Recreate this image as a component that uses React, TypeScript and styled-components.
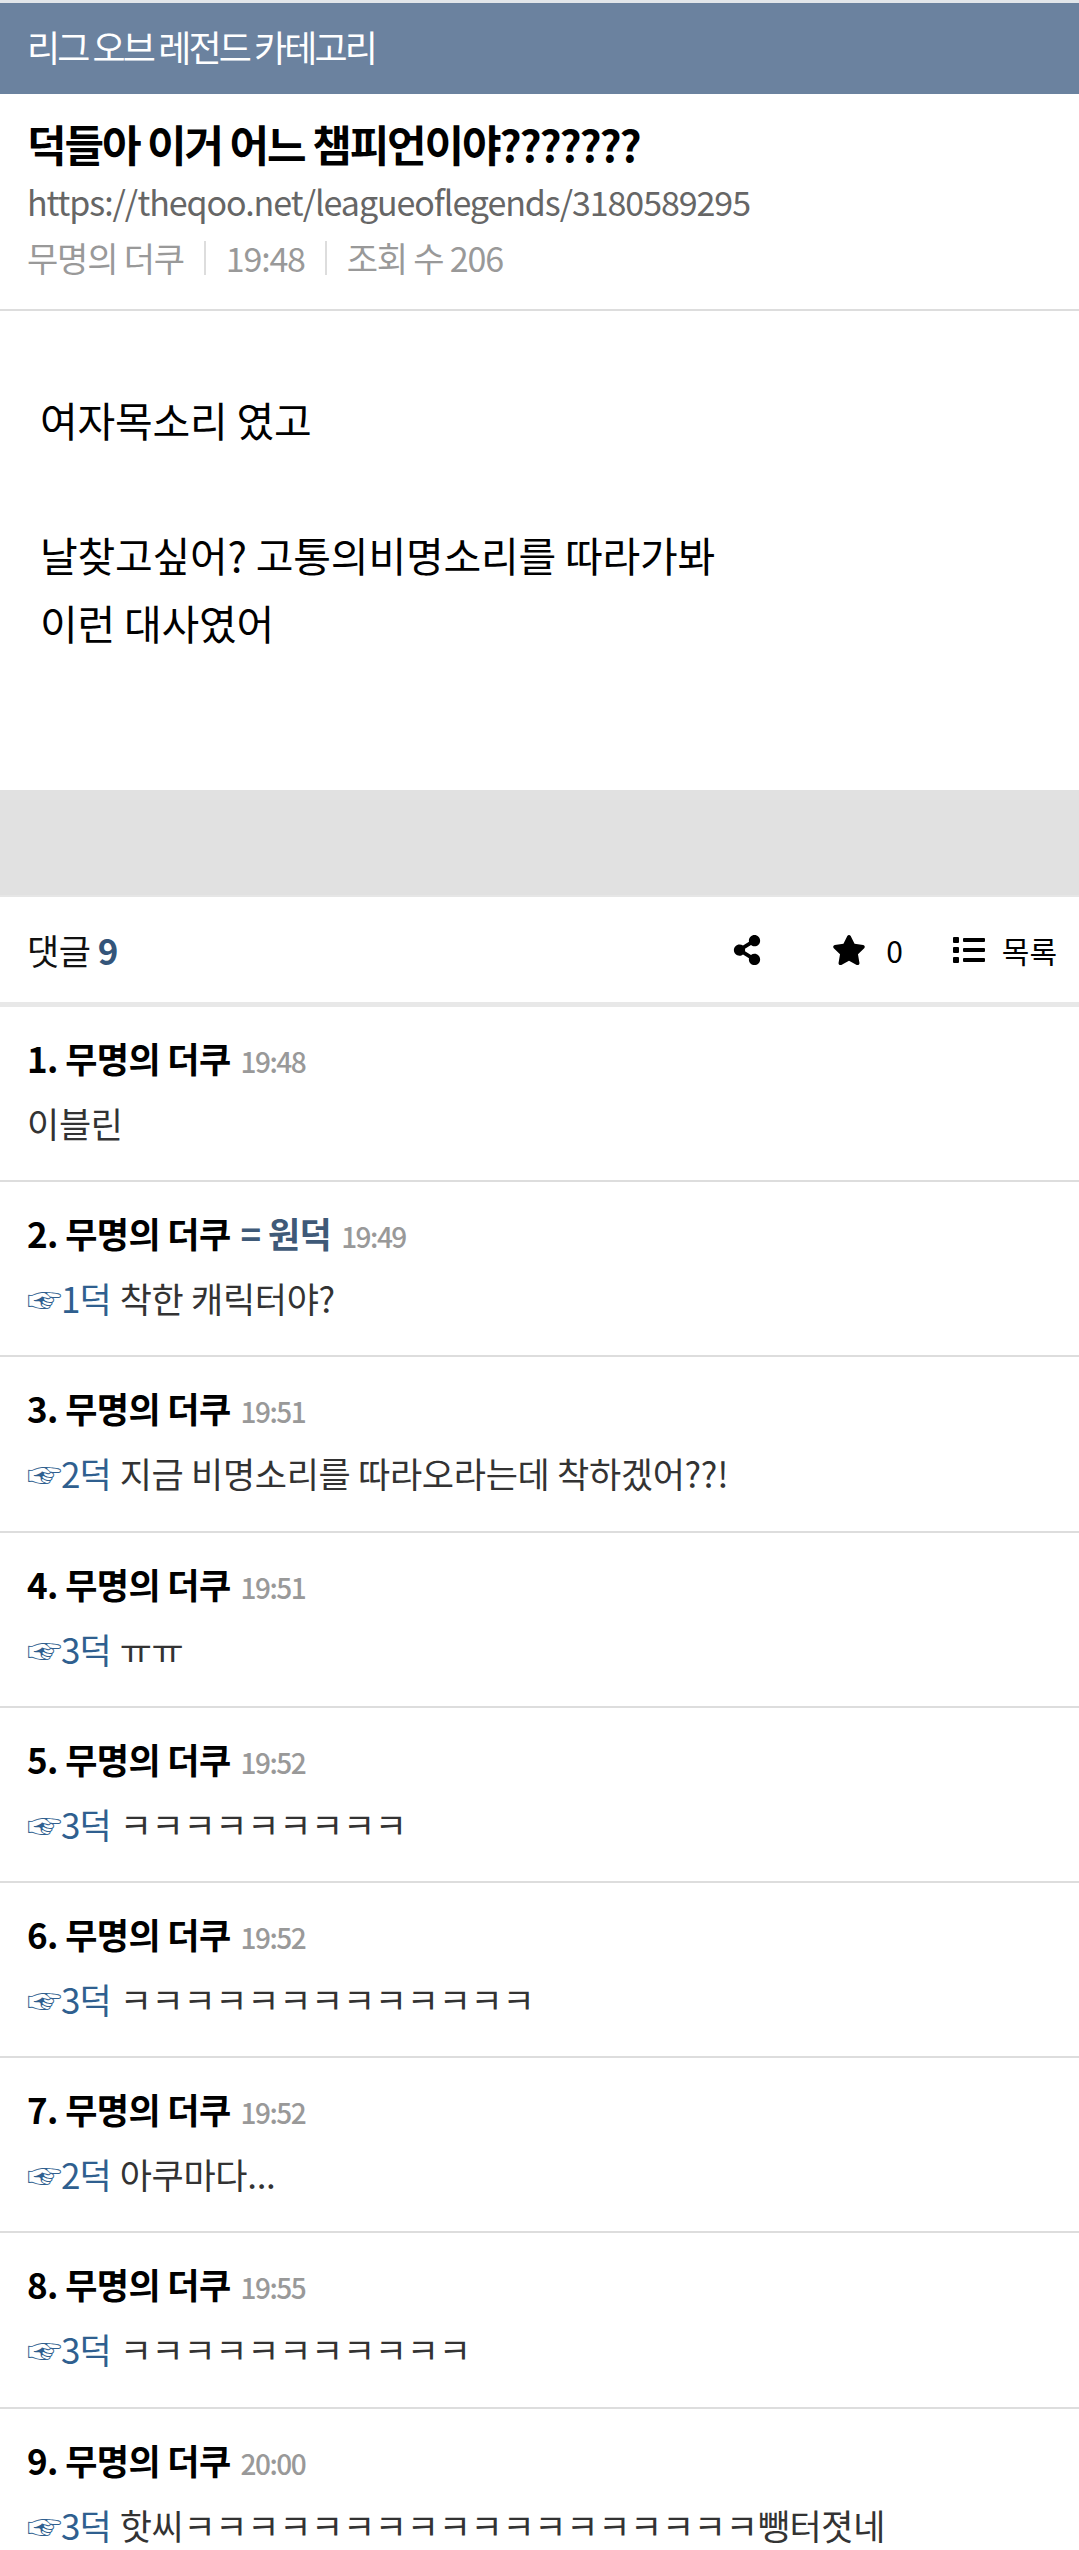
import React from 'react'
import styled, { createGlobalStyle } from 'styled-components'
import { FaList, FaShareAlt, FaStar } from 'react-icons/fa'

const GlobalStyle = createGlobalStyle`
  html, body {
    margin: 0;
    padding: 0;
    background: #ffffff;
    font-family: 'Noto Sans CJK KR', 'Noto Sans', sans-serif;
  }
  * {
    box-sizing: border-box;
  }
`

// Style
const Page = styled.div`
  width: 1079px;
  height: 2550px;
  overflow: hidden;
  background: #ffffff;
`
const CategoryBar = styled.div`
  height: 94px;
  border-top: 3px solid #e2e6ea;
  background: #6b829f;
  color: #ffffff;
  font-size: 36px;
  letter-spacing: -2.9px;
  line-height: 86px;
  padding-left: 27px;
`
const Head = styled.div`
  height: 217px;
  padding: 19px 27px 0;
  border-bottom: 2px solid #dddddd;
`
const Title = styled.h1`
  margin: 0;
  font-size: 43px;
  font-weight: 700;
  line-height: 60px;
  letter-spacing: -2.1px;
  color: #000000;
`
const Url = styled.div`
  margin-top: 4px;
  font-size: 34px;
  line-height: 50px;
  letter-spacing: -1.07px;
  color: #666666;
`
const Meta = styled.div`
  margin-top: 6px;
  display: flex;
  align-items: center;
  font-size: 34px;
  line-height: 50px;
  letter-spacing: -1.2px;
  color: #999999;
`
const MetaItem = styled.span`
  & + & {
    margin-left: 20px;
    padding-left: 20px;
    border-left: 2px solid #dddddd;
    line-height: 34px;
  }
`
const Body = styled.div`
  height: 479px;
  padding: 75px 40px 0;
  font-size: 41px;
  line-height: 67.5px;
  letter-spacing: -0.2px;
  color: #000000;
`
const Spacer = styled.div`
  height: 107px;
  background: #e1e1e1;
  border-bottom: 2px solid #e6e6e6;
`
const CommentBar = styled.div`
  height: 110px;
  display: flex;
  align-items: center;
  padding: 0 22px 0 27px;
  border-bottom: 5px solid #e8e8e8;
`
const CommentCount = styled.div`
  flex: 1;
  font-size: 35px;
  letter-spacing: -0.5px;
  color: #111111;
`
const CountNumber = styled.b`
  color: #34557a;
  font-weight: 700;
`
const Action = styled.div<{ $gap: number; $left: number }>`
  display: flex;
  align-items: center;
  gap: ${(p) => p.$gap}px;
  margin-left: ${(p) => p.$left}px;
  font-size: 30px;
  color: #000000;
`
const Row = styled.div`
  height: 175.2px;
  padding: 24px 27px 0;
  border-bottom: 2px solid #dddddd;
  &:last-child {
    border-bottom: 0;
  }
`
const RowHead = styled.div`
  font-size: 35px;
  line-height: 54px;
  font-weight: 700;
  letter-spacing: -0.6px;
  color: #000000;
  white-space: nowrap;
`
const Writer = styled.span`
  color: #3f5a78;
  margin-left: 10px;
`
const Time = styled.span`
  margin-left: 10px;
  font-size: 28px;
  font-weight: 500;
  letter-spacing: -1.5px;
  color: #999999;
`
const RowText = styled.div`
  margin-top: 10px;
  font-size: 35px;
  line-height: 50px;
  letter-spacing: -0.3px;
  color: #333333;
  white-space: nowrap;
`
const Reply = styled.span`
  color: #2f5f8f;
  letter-spacing: -1px;
  margin-right: 9px;
`

// Data
type TComment = {
  time: string
  text: string
  reply?: string
  origin?: boolean
}

const comments: TComment[] = [
  { time: '19:48', text: '이블린' },
  { time: '19:49', reply: '1덕', text: '착한 캐릭터야?', origin: true },
  { time: '19:51', reply: '2덕', text: '지금 비명소리를 따라오라는데 착하겠어??!' },
  { time: '19:51', reply: '3덕', text: 'ㅠㅠ' },
  { time: '19:52', reply: '3덕', text: 'ㅋㅋㅋㅋㅋㅋㅋㅋㅋ' },
  { time: '19:52', reply: '3덕', text: 'ㅋㅋㅋㅋㅋㅋㅋㅋㅋㅋㅋㅋㅋ' },
  { time: '19:52', reply: '2덕', text: '아쿠마다...' },
  { time: '19:55', reply: '3덕', text: 'ㅋㅋㅋㅋㅋㅋㅋㅋㅋㅋㅋ' },
  { time: '20:00', reply: '3덕', text: '핫씨ㅋㅋㅋㅋㅋㅋㅋㅋㅋㅋㅋㅋㅋㅋㅋㅋㅋㅋ뺑터졋네' },
]

// Component
const App = () => {
  return (
    <Page>
      <GlobalStyle />
      <CategoryBar>리그 오브 레전드 카테고리</CategoryBar>
      <Head>
        <Title>덕들아 이거 어느 챔피언이야???????</Title>
        <Url>https://theqoo.net/leagueoflegends/3180589295</Url>
        <Meta>
          <MetaItem>무명의 더쿠</MetaItem>
          <MetaItem>19:48</MetaItem>
          <MetaItem>조회 수 206</MetaItem>
        </Meta>
      </Head>
      <Body>
        여자목소리 였고
        <br />
        <br />
        날찾고싶어? 고통의비명소리를 따라가봐
        <br />
        이런 대사였어
      </Body>
      <Spacer />
      <CommentBar>
        <CommentCount>
          댓글 <CountNumber>9</CountNumber>
        </CommentCount>
        <Action $gap={0} $left={0}>
          <FaShareAlt size={30} />
        </Action>
        <Action $gap={20} $left={70}>
          <FaStar size={34} />0
        </Action>
        <Action $gap={17} $left={50}>
          <FaList size={32} />
          목록
        </Action>
      </CommentBar>
      {comments.map((c, i) => (
        <Row key={i}>
          <RowHead>
            {i + 1}. 무명의 더쿠
            {c.origin && <Writer>= 원덕</Writer>}
            <Time>{c.time}</Time>
          </RowHead>
          <RowText>
            {c.reply && <Reply>☞{c.reply}</Reply>}
            {c.text}
          </RowText>
        </Row>
      ))}
    </Page>
  )
}

export default App
